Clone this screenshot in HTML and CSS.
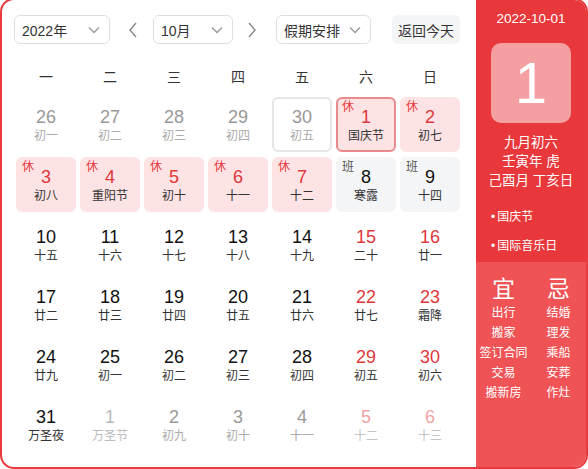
FILE: index.html
```html
<!DOCTYPE html>
<html lang="zh">
<head>
<meta charset="utf-8">
<link rel="stylesheet" href="styles.css">
</head>
<body>
<div class="cal">
  <div class="main">
    <div class="toolbar">
      <div class="select sel-year"><span>2022年</span><svg class="chev" viewBox="0 0 12 8"><path d="M1 1.5 L6 6.5 L11 1.5" /></svg></div>
      <svg class="nav prev" viewBox="0 0 10 16"><path d="M8 1 L2 8 L8 15" /></svg>
      <div class="select sel-month"><span>10月</span><svg class="chev" viewBox="0 0 12 8"><path d="M1 1.5 L6 6.5 L11 1.5" /></svg></div>
      <svg class="nav next" viewBox="0 0 10 16"><path d="M2 1 L8 8 L2 15" /></svg>
      <div class="select sel-holiday"><span>假期安排</span><svg class="chev" viewBox="0 0 12 8"><path d="M1 1.5 L6 6.5 L11 1.5" /></svg></div>
      <div class="today-btn">返回今天</div>
    </div>
    <div class="weekdays">
      <span>一</span><span>二</span><span>三</span><span>四</span><span>五</span><span>六</span><span>日</span>
    </div>
    <div class="grid">
      <div class="cell other"><b>26</b><i>初一</i></div>
      <div class="cell other"><b>27</b><i>初二</i></div>
      <div class="cell other"><b>28</b><i>初三</i></div>
      <div class="cell other"><b>29</b><i>初四</i></div>
      <div class="cell other today"><b>30</b><i>初五</i></div>
      <div class="cell rest selected"><em>休</em><b>1</b><i>国庆节</i></div>
      <div class="cell rest"><em>休</em><b>2</b><i>初七</i></div>

      <div class="cell rest"><em>休</em><b>3</b><i>初八</i></div>
      <div class="cell rest"><em>休</em><b>4</b><i>重阳节</i></div>
      <div class="cell rest"><em>休</em><b>5</b><i>初十</i></div>
      <div class="cell rest"><em>休</em><b>6</b><i>十一</i></div>
      <div class="cell rest"><em>休</em><b>7</b><i>十二</i></div>
      <div class="cell work"><em>班</em><b>8</b><i>寒露</i></div>
      <div class="cell work"><em>班</em><b>9</b><i>十四</i></div>

      <div class="cell"><b>10</b><i>十五</i></div>
      <div class="cell"><b>11</b><i>十六</i></div>
      <div class="cell"><b>12</b><i>十七</i></div>
      <div class="cell"><b>13</b><i>十八</i></div>
      <div class="cell"><b>14</b><i>十九</i></div>
      <div class="cell wkend"><b>15</b><i>二十</i></div>
      <div class="cell wkend"><b>16</b><i>廿一</i></div>

      <div class="cell"><b>17</b><i>廿二</i></div>
      <div class="cell"><b>18</b><i>廿三</i></div>
      <div class="cell"><b>19</b><i>廿四</i></div>
      <div class="cell"><b>20</b><i>廿五</i></div>
      <div class="cell"><b>21</b><i>廿六</i></div>
      <div class="cell wkend"><b>22</b><i>廿七</i></div>
      <div class="cell wkend"><b>23</b><i>霜降</i></div>

      <div class="cell"><b>24</b><i>廿九</i></div>
      <div class="cell"><b>25</b><i>初一</i></div>
      <div class="cell"><b>26</b><i>初二</i></div>
      <div class="cell"><b>27</b><i>初三</i></div>
      <div class="cell"><b>28</b><i>初四</i></div>
      <div class="cell wkend"><b>29</b><i>初五</i></div>
      <div class="cell wkend"><b>30</b><i>初六</i></div>

      <div class="cell"><b>31</b><i>万圣夜</i></div>
      <div class="cell other fest"><b>1</b><i>万圣节</i></div>
      <div class="cell other"><b>2</b><i>初九</i></div>
      <div class="cell other"><b>3</b><i>初十</i></div>
      <div class="cell other"><b>4</b><i>十一</i></div>
      <div class="cell other wkend"><b>5</b><i>十二</i></div>
      <div class="cell other wkend"><b>6</b><i>十三</i></div>
    </div>
  </div>
  <div class="side">
    <div class="side-top">
      <div class="date">2022-10-01</div>
      <div class="bigday">1</div>
      <div class="lunar">
        <div>九月初六</div>
        <div>壬寅年 虎</div>
        <div>己酉月 丁亥日</div>
      </div>
      <ul class="fests">
        <li>国庆节</li>
        <li>国际音乐日</li>
      </ul>
    </div>
    <div class="side-bottom">
      <div class="col">
        <div class="head">宜</div>
        <div>出行</div><div>搬家</div><div>签订合同</div><div>交易</div><div>搬新房</div>
      </div>
      <div class="col">
        <div class="head">忌</div>
        <div>结婚</div><div>理发</div><div>乘船</div><div>安葬</div><div>作灶</div>
      </div>
    </div>
  </div>
</div>
</body>
</html>
```

FILE: styles.css
```css
* { box-sizing: border-box; }
html, body { margin: 0; padding: 0; background: #fff; }
body {
  font-family: "Liberation Sans", "Noto Sans CJK SC", sans-serif;
  color: #333;
  overflow: hidden;
}
.cal {
  width: 588px;
  height: 471px;
  margin-top: -2px;
  border: 2px solid #e8393c;
  border-radius: 14px;
  overflow: hidden;
  display: flex;
  background: #fff;
}
.main {
  width: 474px;
  flex: none;
  padding-top: 15px;
}
.toolbar {
  display: flex;
  align-items: center;
  height: 29px;
  padding-left: 12px;
}
.select {
  height: 29px;
  border: 1px solid #dcdfe6;
  border-radius: 6px;
  display: flex;
  align-items: center;
  justify-content: space-between;
  padding: 0 9px 0 7px;
  font-size: 14px;
  color: #333;
}
.chev {
  width: 12px;
  height: 8px;
  fill: none;
  stroke: #999;
  stroke-width: 1.3;
}
.sel-year { width: 96px; }
.sel-month { width: 80px; }
.sel-holiday { width: 95px; }
.nav {
  width: 10px;
  height: 16px;
  fill: none;
  stroke: #888;
  stroke-width: 1.4;
}
.prev { margin: 0 15px 0 18px; }
.next { margin: 0 19px 0 14px; }
.today-btn {
  margin-left: 21px;
  width: 68px;
  height: 29px;
  border-radius: 6px;
  background: #f4f5f7;
  font-size: 14px;
  color: #333;
  display: flex;
  align-items: center;
  justify-content: center;
}
.weekdays {
  margin: 23px 16px 10px 14px;
  display: grid;
  grid-template-columns: repeat(7, 60px);
  column-gap: 4px;
  height: 20px;
  line-height: 20px;
  font-size: 14px;
  color: #333;
  text-align: center;
}
.grid {
  margin: 0 16px 0 14px;
  display: grid;
  grid-template-columns: repeat(7, 60px);
  grid-auto-rows: 55px;
  column-gap: 4px;
  row-gap: 5px;
}
.cell {
  position: relative;
  border-radius: 6px;
  text-align: center;
  padding-top: 10px;
  border: 2px solid transparent;
}
.cell b {
  display: block;
  font-weight: normal;
  font-size: 18px;
  line-height: 20px;
  margin-top: -2px;
  color: #111;
}
.cell i {
  display: block;
  font-style: normal;
  font-size: 12px;
  line-height: 16px;
  margin-top: 1px;
  color: #333;
}
.cell em {
  position: absolute;
  left: 4px;
  top: 1px;
  font-style: normal;
  font-size: 12px;
  line-height: 14px;
  color: #e8393c;
}
.cell.wkend b { color: #e0383b; }
.cell.other b { color: #999; }
.cell.other i { color: #aaa; }
.cell.other.fest b, .cell.other.fest i { color: #bbb; }
.cell.other.wkend b { color: #f0a3a6; }
.cell.other.wkend i { color: #c4c4c4; }
.cell.today { border-color: #e6e6e6; }
.cell.rest { background: #fde3e4; }
.cell.rest b { color: #e0383b; }
.cell.rest i { color: #333; }
.cell.selected { border-color: #e98a8c; }
.cell.work { background: #f4f5f7; }
.cell.work em { color: #555; }
.cell.work b { color: #111; }

.side {
  flex: 1;
  display: flex;
  flex-direction: column;
  color: #fff;
}
.side-top {
  background: #e8383c;
  height: 262px;
  padding-top: 11px;
  text-align: center;
}
.date {
  font-size: 13.5px;
  line-height: 16px;
}
.bigday {
  width: 80px;
  height: 80px;
  margin: 16px auto 0;
  border-radius: 10px;
  background: #f4a0a2;
  font-size: 58px;
  line-height: 80px;
  color: #fff;
}
.lunar {
  margin-top: 10px;
  font-size: 13.5px;
  line-height: 19px;
}
.fests {
  list-style: none;
  margin: 13px 0 0;
  padding: 0 0 0 17px;
  text-align: left;
  font-size: 12px;
  line-height: 29px;
}
.fests li::before {
  content: "•";
  margin-right: 2px;
  margin-left: -2px;
}
.side-bottom {
  flex: 1;
  background: #ef5355;
  display: flex;
  padding-top: 14px;
}
.col {
  flex: 1;
  text-align: center;
  font-size: 12px;
  line-height: 20px;
}
.col .head {
  font-size: 23px;
  line-height: 27px;
}
```
